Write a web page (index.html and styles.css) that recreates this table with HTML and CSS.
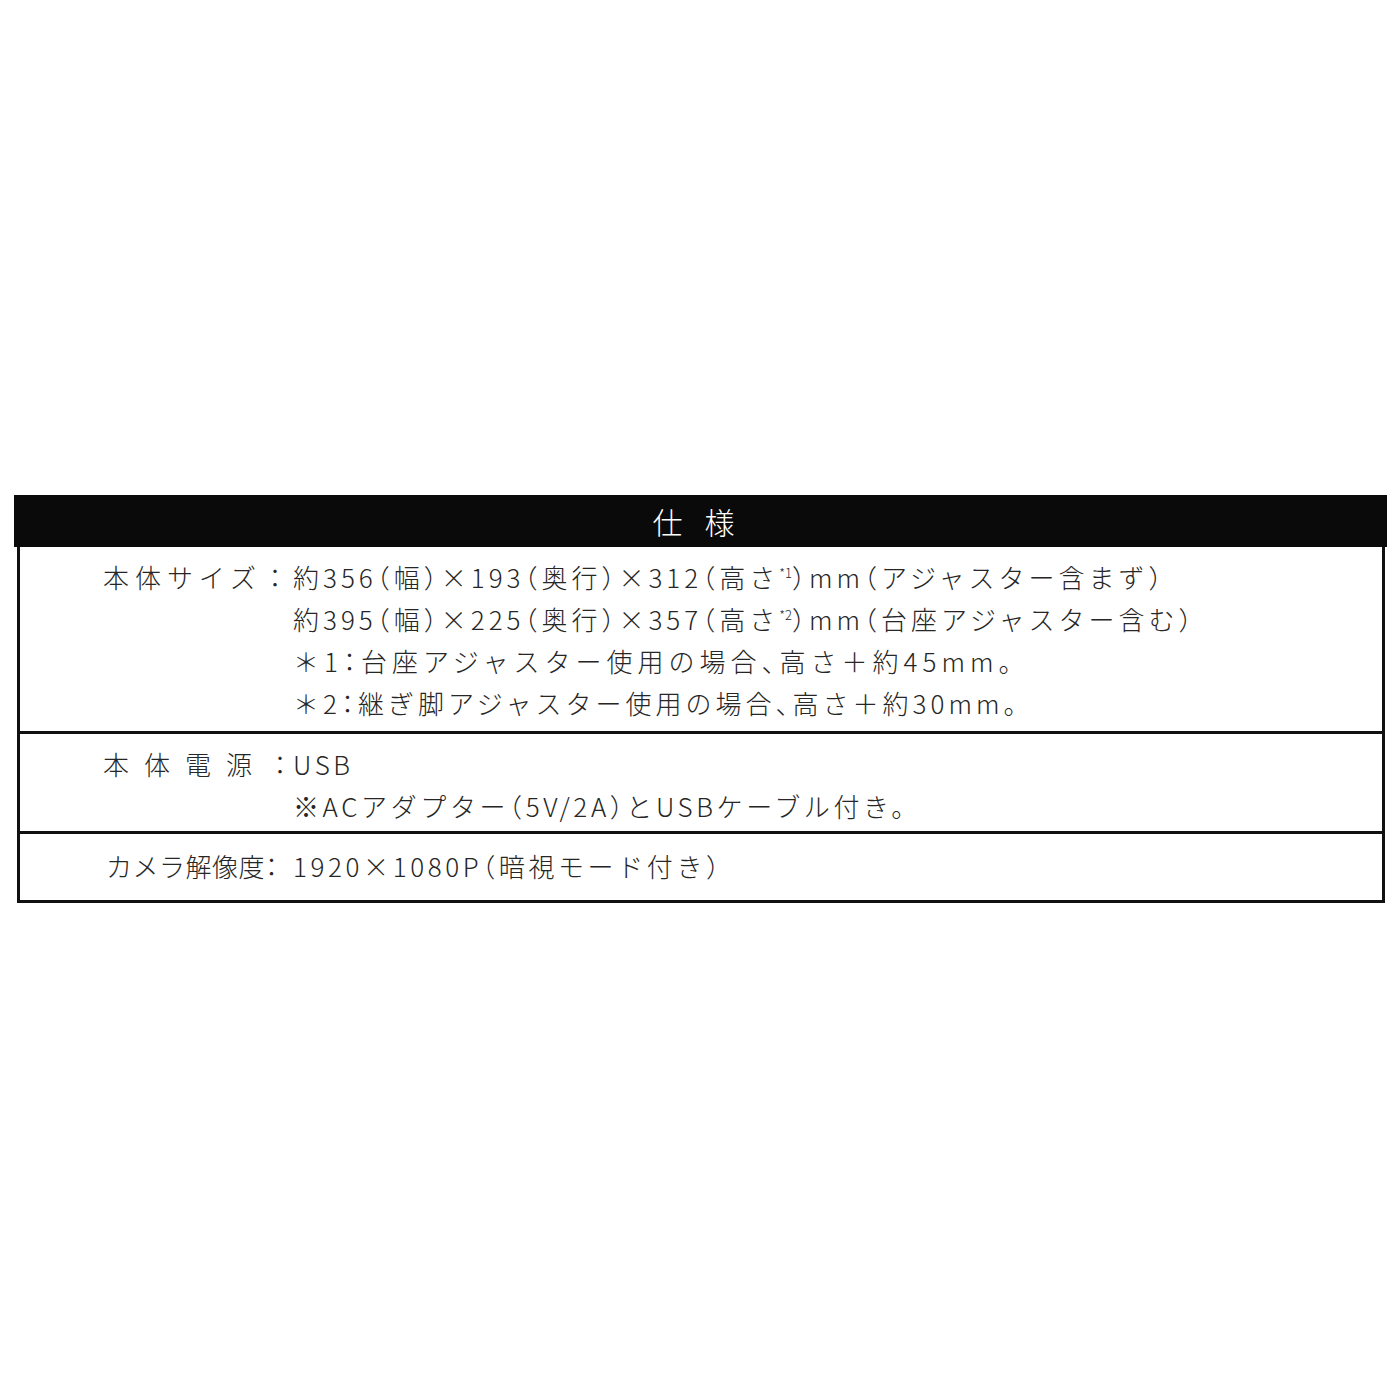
FILE: index.html
```html
<!DOCTYPE html>
<html lang="ja">
<head>
<meta charset="utf-8">
<title>仕様</title>
<link rel="stylesheet" href="styles.css">
</head>
<body>
<div class="spec">
  <div class="spec-head"><span class="head-text">仕様</span></div>
  <div class="spec-body">
    <div class="row row-size">
      <div class="label">本体サイズ：</div>
      <div class="value">
        <div class="line">約356（幅）×193（奥行）×312（高さ<sup>*1</sup>）mm（アジャスター含まず）</div>
        <div class="line">約395（幅）×225（奥行）×357（高さ<sup>*2</sup>）mm（台座アジャスター含む）</div>
        <div class="line line-note1">＊1：台座アジャスター使用の場合、高さ＋約45mm。</div>
        <div class="line">＊2：継ぎ脚アジャスター使用の場合、高さ＋約30mm。</div>
      </div>
    </div>
    <div class="row row-power">
      <div class="label">本体電源：</div>
      <div class="value value-tight">
        <div class="line">USB</div>
        <div class="line">※ACアダプター（5V/2A）とUSBケーブル付き。</div>
      </div>
    </div>
    <div class="row row-camera">
      <div class="label">カメラ解像度：</div>
      <div class="value value-tight">
        <div class="line">1920×1080P（暗視モード付き）</div>
      </div>
    </div>
  </div>
</div>
</body>
</html>
```

FILE: styles.css
```css
html, body {
  margin: 0;
  padding: 0;
  background: #ffffff;
}
body {
  font-family: "Noto Sans CJK JP", "Noto Sans", sans-serif;
  font-weight: 300;
  color: #262626;
}
.spec {
  margin: 495px 0 0 14px;
  width: 1373px;
}
.spec-head {
  background: #0a0a0a;
  color: #ffffff;
  height: 52px;
  line-height: 52px;
  text-align: center;
  font-size: 30px;
}
.head-text {
  letter-spacing: 22px;
  padding-left: 8px;
}
.spec-body {
  margin: 0 2px 0 3px;
  border: 3px solid #111111;
  border-top: none;
}
.row {
  display: flex;
  padding: 9px 0 7px 83px;
  font-size: 26px;
  line-height: 42px;
}
.row + .row {
  border-top: 3px solid #111111;
}
.row-power {
  padding-bottom: 4px;
}
.row-camera {
  padding: 11px 0 13px 86px;
}
.label {
  width: 185px;
  flex: none;
  white-space: nowrap;
  text-align: justify;
  text-align-last: justify;
}
.row-power .label {
  width: 190px;
}
.row-camera .label {
  width: 172px;
  font-feature-settings: "halt";
}
.value {
  padding-left: 5px;
  letter-spacing: 4px;
  font-feature-settings: "halt";
}
.row-power .value {
  padding-left: 0;
}
.row-camera .value {
  padding-left: 15px;
}
.value-tight {
  letter-spacing: 3.6px;
}
.line {
  white-space: nowrap;
}
.line-note1 {
  letter-spacing: 5px;
}
sup {
  font-size: 13px;
  line-height: 0;
  vertical-align: 10px;
  letter-spacing: 0;
}
```
